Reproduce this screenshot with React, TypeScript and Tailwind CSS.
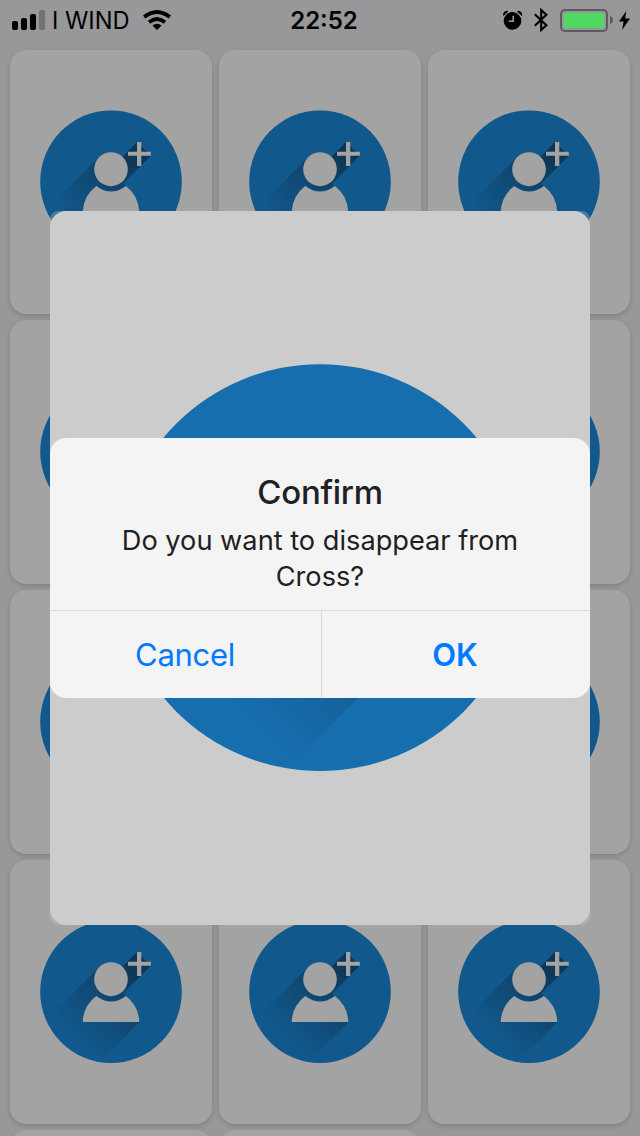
import { useId } from "react";

function Avatar({ className }: { className: string }) {
  const id = useId();
  return (
    <svg viewBox="0 0 142 142" className={className} preserveAspectRatio="none">
      <defs>
        <linearGradient id={id} gradientUnits="userSpaceOnUse" x1="106" y1="36" x2="32" y2="110">
          <stop offset="0" stopColor="#10161c" stopOpacity="0.5" />
          <stop offset="0.22" stopColor="#10161c" stopOpacity="0.4" />
          <stop offset="0.47" stopColor="#10161c" stopOpacity="0.25" />
          <stop offset="0.7" stopColor="#10161c" stopOpacity="0.13" />
          <stop offset="1" stopColor="#10161c" stopOpacity="0" />
        </linearGradient>
      </defs>
      <circle cx="71" cy="71.2" r="70.8" fill="#1c8adb" />
      <g transform="translate(0 0.8)">
        <path d="M97 31 L110.7 44.7 L83 72.4 L86 75 L99.3 100.7 L60.5 139.5 L13 92 L59 46 L80 48 Z" fill={`url(#${id})`} />
        <circle cx="71" cy="58" r="16.8" fill="#fff" />
        <path d="M97 31H101.3V40.7H110.8V44.6H101.3V54.8H97V44.6H88V40.7H97Z" fill="#fff" />
        <path d="M56.3 74.6 Q71 85.6 85.9 74.6 Q98.5 84 99.3 100.4 H42.7 Q43.5 84 56.3 74.6Z" fill="#fff" />
      </g>
    </svg>
  );
}

function Card() {
  return (
    <div className="flex h-[264px] w-[202px] items-start justify-center rounded-2xl bg-white pt-[60px] shadow-[0_2px_5px_rgba(0,0,0,0.16)]">
      <Avatar className="h-[143px] w-[142px]" />
    </div>
  );
}

function StatusBar() {
  return (
    <header className="absolute inset-x-0 top-0 flex h-10 items-center text-black">
      <div className="flex w-[290px] items-center pl-3">
        <div className="flex h-5 items-end gap-[3px]">
          <i className="h-[9px] w-1.5 rounded-[2px] bg-black" />
          <i className="h-3 w-1.5 rounded-[2px] bg-black" />
          <i className="h-4 w-1.5 rounded-[2px] bg-black" />
          <i className="h-5 w-1.5 rounded-[2px] bg-[#727274]" />
        </div>
        <span className="ml-[7px] w-[78px] pt-0.5 text-[23.7px] leading-10 whitespace-nowrap">I WIND</span>
        <svg viewBox="0 0 28 20" className="ml-[13px] h-5 w-7 shrink-0">
          <g fill="none" stroke="#000" strokeWidth="3.8">
            <path d="M1.2 6.9Q14 -3 26.8 6.9" />
            <path d="M6 12.2Q14 5.9 22 12.2" />
          </g>
          <path d="M9.4 15.5Q14 11.8 18.6 15.5L14 20Z" />
        </svg>
      </div>
      <time className="w-[68px] pt-0.5 text-center text-[24px] leading-10 font-semibold whitespace-nowrap">22:52</time>
      <div className="ml-auto flex items-center pr-[10px]">
        <svg viewBox="0 0 20 20" className="mb-px h-5 w-5">
          <circle cx="9.5" cy="10.9" r="8.8" />
          <path d="M0 5.4Q.1 1 4.5 .8L5.1 1.4 .7 5.8Z M19.2 5.4Q19.1 1 14.7 .8L14.1 1.4 18.5 5.8Z" />
          <path d="M10.2 5.7V11.3H5.7" fill="none" stroke="#98989a" strokeWidth="1.6" />
        </svg>
        <svg viewBox="0 0 16 24" className="ml-[10px] h-6 w-4">
          <path d="M1.8 6.2L13.4 17.2 8.2 22V2L13.4 6.8 1.8 17.8" fill="none" stroke="#000" strokeWidth="2.1" />
        </svg>
        <div className="ml-[11px] h-[23px] w-12 rounded-[5px] border-2 border-[#5c5c5e] p-[2px]">
          <div className="h-full rounded-[1px] bg-[#4cd964]" />
        </div>
        <svg viewBox="0 0 3 8" className="ml-[2px] h-2 w-[3px]"><path d="M0 0Q3 1 3 4T0 8Z" fill="#5c5c5e" /></svg>
        <svg viewBox="0 0 11 19" className="ml-[6px] h-[19px] w-[11px]">
          <path d="M7.2 0L0 10.6H4.6L3.1 19 11 7.6H6.2Z" />
        </svg>
      </div>
    </header>
  );
}

export default function App() {
  return (
    <main className="relative h-[1136px] w-[640px] overflow-hidden bg-[#efeff2] font-['Inter',sans-serif]">
      <section className="grid grid-cols-[repeat(3,202px)] gap-x-[7px] gap-y-[6px] px-[10px] pt-[50px]">
        {Array.from({ length: 14 }, (_, i) => <Card key={i} />)}
      </section>

      <div className="absolute inset-0 flex items-center justify-center bg-black/20">
        <div className="h-[714px] w-[540px] overflow-hidden rounded-[8px] bg-white/30">
          <div className="flex h-full items-center justify-center rounded-2xl bg-white">
            <Avatar className="mb-[2px] size-[408px]" />
          </div>
        </div>
      </div>

      <div className="absolute inset-0 flex items-center justify-center bg-black/20">
        <div role="alertdialog" className="flex h-[260px] w-[540px] flex-col overflow-hidden rounded-2xl bg-[#f4f4f4] text-[#1f2021]">
          <div className="flex h-[172px] flex-col items-center pt-[34px]">
            <h1 className="text-[33px] leading-10 font-medium tracking-[-0.3px] whitespace-nowrap">Confirm</h1>
            <p className="mt-[11px] text-center text-[27.2px] leading-9 whitespace-nowrap">
              Do you want to disappear from<br />Cross?
            </p>
          </div>
          <div className="flex flex-1 border-t border-[#d9d9da] text-[31px] text-[#007aff]">
            <button className="w-[272px] border-r border-[#d9d9da] pt-0.5 pr-px tracking-[-0.3px]">Cancel</button>
            <button className="flex-1 pt-0.5 pr-0.5 font-semibold">OK</button>
          </div>
        </div>
      </div>

      <StatusBar />
    </main>
  );
}
